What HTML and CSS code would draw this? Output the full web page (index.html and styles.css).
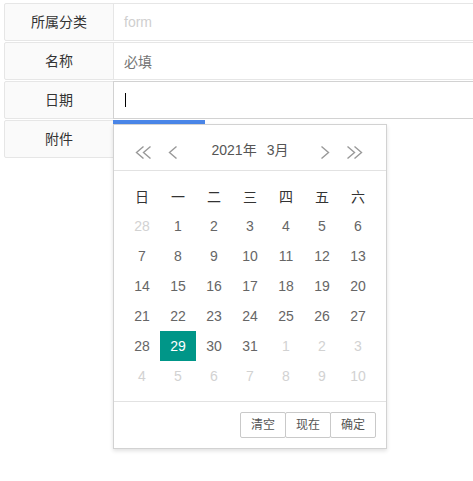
FILE: index.html
```html
<!DOCTYPE html>
<html lang="zh">
<head>
<meta charset="utf-8">
<link rel="stylesheet" href="styles.css">
</head>
<body>
<div class="form">
  <div class="item">
    <div class="label">所属分类</div>
    <div class="input"><span class="ph-light">form</span></div>
  </div>
  <div class="item">
    <div class="label">名称</div>
    <div class="input"><span class="ph">必填</span></div>
  </div>
  <div class="item">
    <div class="label">日期</div>
    <div class="input focus"><span class="caret"></span></div>
  </div>
  <div class="item">
    <div class="label">附件</div>
    <div class="bluebar"></div>
  </div>
</div>

<div class="laydate">
  <div class="header">
    <span class="ico"><svg width="18" height="18" viewBox="0 0 18 18"><path d="M9.5 5.5 L2.5 11.5 L9.5 17.5 M16.5 5.5 L9.5 11.5 L16.5 17.5" fill="none" stroke="#999" stroke-width="1.4"/></svg></span>
    <span class="ico"><svg width="18" height="18" viewBox="0 0 18 18"><path d="M12.5 5.5 L5.5 11.5 L12.5 17.5" fill="none" stroke="#999" stroke-width="1.4"/></svg></span>
    <div class="ym"><span>2021年</span><span>3月</span></div>
    <span class="ico"><svg width="18" height="18" viewBox="0 0 18 18"><path d="M5.5 5.5 L12.5 11.5 L5.5 17.5" fill="none" stroke="#999" stroke-width="1.4"/></svg></span>
    <span class="ico"><svg width="18" height="18" viewBox="0 0 18 18"><path d="M1.5 5.5 L8.5 11.5 L1.5 17.5 M8.5 5.5 L15.5 11.5 L8.5 17.5" fill="none" stroke="#999" stroke-width="1.4"/></svg></span>
  </div>
  <div class="content">
    <table>
      <thead><tr><th>日</th><th>一</th><th>二</th><th>三</th><th>四</th><th>五</th><th>六</th></tr></thead>
      <tbody>
        <tr><td class="off">28</td><td>1</td><td>2</td><td>3</td><td>4</td><td>5</td><td>6</td></tr>
        <tr><td>7</td><td>8</td><td>9</td><td>10</td><td>11</td><td>12</td><td>13</td></tr>
        <tr><td>14</td><td>15</td><td>16</td><td>17</td><td>18</td><td>19</td><td>20</td></tr>
        <tr><td>21</td><td>22</td><td>23</td><td>24</td><td>25</td><td>26</td><td>27</td></tr>
        <tr><td>28</td><td class="this">29</td><td>30</td><td>31</td><td class="off">1</td><td class="off">2</td><td class="off">3</td></tr>
        <tr><td class="off">4</td><td class="off">5</td><td class="off">6</td><td class="off">7</td><td class="off">8</td><td class="off">9</td><td class="off">10</td></tr>
      </tbody>
    </table>
  </div>
  <div class="footer">
    <span class="btn">清空</span><span class="btn">现在</span><span class="btn">确定</span>
  </div>
</div>
</body>
</html>
```

FILE: styles.css
```css
html, body {
  margin: 0;
  padding: 0;
  background: #fff;
}
body {
  font-family: "Liberation Sans", "Noto Sans CJK SC", sans-serif;
  font-size: 14px;
  color: #333;
}
.form {
  padding: 3px 0 0 4px;
}
.item {
  display: flex;
  height: 38px;
  margin-bottom: 1px;
}
.label {
  width: 110px;
  flex: none;
  box-sizing: border-box;
  height: 38px;
  padding: 8px 15px;
  line-height: 20px;
  border: 1px solid #e6e6e6;
  border-radius: 2px 0 0 2px;
  background: #fafafa;
  text-align: center;
  color: #333;
}
.input {
  flex: 1;
  box-sizing: border-box;
  height: 38px;
  margin-left: -1px;
  border: 1px solid #e6e6e6;
  border-right: none;
  padding-left: 10px;
  display: flex;
  align-items: center;
}
.input.focus {
  border-color: #d2d2d2;
}
.ph-light {
  color: #cfcfcf;
}
.ph {
  color: #757575;
}
.caret {
  display: block;
  width: 1px;
  height: 14px;
  background: #000;
  margin-left: 1px;
}
.bluebar {
  width: 92px;
  height: 4px;
  margin-left: -1px;
  background: #4a86e8;
}
.laydate {
  position: absolute;
  left: 113px;
  top: 124px;
  width: 272px;
  border: 1px solid #d2d2d2;
  background: #fff;
  box-shadow: 0 2px 4px rgba(0,0,0,.12);
  color: #666;
  font-size: 14px;
}
.laydate * {
  box-sizing: border-box;
}
.header {
  height: 45px;
  padding: 10px 15px 5px;
  display: flex;
  align-items: center;
}
.ico {
  width: 30px;
  height: 30px;
  padding: 0 5px;
  display: flex;
  align-items: center;
}
.ico svg {
  display: block;
}
.ym {
  flex: 1;
  text-align: center;
  line-height: 30px;
  white-space: nowrap;
  color: #555;
}
.ym span {
  padding: 0 5px;
}
.content {
  border-top: 1px solid #e2e2e2;
  border-bottom: 1px solid #e2e2e2;
  padding: 10px;
}
table {
  border-collapse: collapse;
  border-spacing: 0;
}
th, td {
  width: 36px;
  height: 30px;
  padding: 0;
  text-align: center;
  font-weight: 400;
}
th {
  color: #333;
}
td {
  color: #666;
}
td.off {
  color: #d2d2d2;
}
td.this {
  background: #009688;
  color: #fff;
}
.footer {
  height: 46px;
  padding: 10px;
  display: flex;
  justify-content: flex-end;
  align-items: flex-start;
}
.btn {
  display: inline-block;
  height: 26px;
  line-height: 24px;
  padding: 0 10px;
  border: 1px solid #c9c9c9;
  border-radius: 2px;
  background: #fff;
  font-size: 12px;
  color: #555;
  margin-left: -1px;
  white-space: nowrap;
}
```
